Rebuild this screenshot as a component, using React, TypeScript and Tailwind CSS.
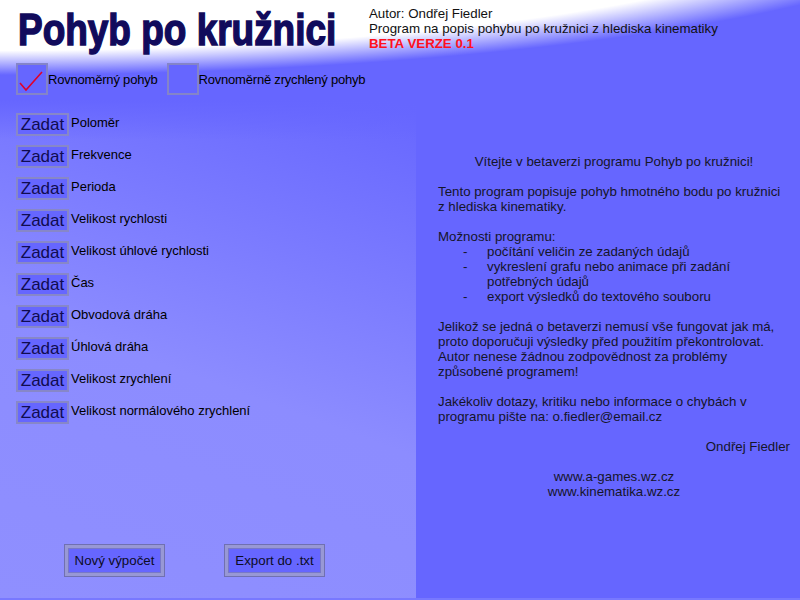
import React from 'react';

const quantities = [
  'Poloměr',
  'Frekvence',
  'Perioda',
  'Velikost rychlosti',
  'Velikost úhlové rychlosti',
  'Čas',
  'Obvodová dráha',
  'Úhlová dráha',
  'Velikost zrychlení',
  'Velikost normálového zrychlení',
];

const CheckBox: React.FC<{ checked?: boolean; label: string }> = ({ checked, label }) => (
  <div className="flex items-center">
    <div className="w-[32px] h-[32px] border-2 border-[#8484c8] bg-[#6666ff] flex-shrink-0">
      {checked && (
        <svg width="28" height="28" viewBox="0 0 28 28">
          <path d="M2 18 L8 25 L24 7" fill="none" stroke="#e0002a" strokeWidth="1.6" />
        </svg>
      )}
    </div>
    <span className="text-[13px] leading-[15px] text-black tracking-[-0.2px]">{label}</span>
  </div>
);

const BigButton: React.FC<{ children: React.ReactNode }> = ({ children }) => (
  <button className="w-[101px] h-[33px] border border-[#7070b0] bg-[#6666ff] shadow-[inset_0_0_0_3px_#9898d4,inset_0_0_0_4px_#7777c8] text-[13.3px] leading-[15px] text-[#0c0c26] flex items-center justify-center">
    {children}
  </button>
);

const Line: React.FC<{ children?: React.ReactNode; className?: string }> = ({ children, className = '' }) => (
  <div className={`h-[15px] whitespace-nowrap ${className}`}>{children}</div>
);

const Bullet: React.FC<{ children: React.ReactNode }> = ({ children }) => (
  <div className="flex">
    <div className="w-[49px] pl-[25px] flex-shrink-0 h-[15px]">-</div>
    <div>{children}</div>
  </div>
);

export default function App() {
  return (
    <div className="w-[800px] h-[600px] overflow-hidden flex flex-col bg-[#6666ff] bg-[radial-gradient(ellipse_1000px_175px_at_0px_-100px,#ffffff_86%,#6666ff_100%)] [font-family:'Liberation_Sans',Arial,sans-serif]">
      {/* header */}
      <div className="flex items-start h-[52px]">
        <div className="w-[369px] pl-[18px] pt-[8px] flex-shrink-0">
          <h1 className="text-[44px] leading-[44px] font-bold text-[#110b5c] whitespace-nowrap scale-x-[0.84] origin-left [-webkit-text-stroke:1.5px_#110b5c]">
            Pohyb po kružnici
          </h1>
        </div>
        <div className="pt-[6px] text-[13.3px] leading-[15px] text-[#111111]">
          <div>Autor: Ondřej Fiedler</div>
          <div>Program na popis pohybu po kružnici z hlediska kinematiky</div>
          <div className="text-[#ff1020] font-bold">BETA VERZE 0.1</div>
        </div>
      </div>

      {/* motion type */}
      <div className="flex items-center gap-[9px] pl-[16px] mt-[11px] h-[32px]">
        <CheckBox checked label="Rovnoměrný pohyb" />
        <CheckBox label="Rovnoměrně zrychlený pohyb" />
      </div>

      {/* main */}
      <div className="flex flex-1 mt-[5px] border-b-2 border-[#7878ff]">
        <div className="w-[416px] flex flex-col bg-[linear-gradient(to_bottom,#6666ff_0px,rgba(102,102,255,0)_40px),linear-gradient(200deg,#6666ff_0%,#8c8cff_55%,#8f8fff_100%)]">
          <div className="flex flex-col gap-[9px] pl-[16px] pt-[13px]">
            {quantities.map((q) => (
              <div key={q} className="flex items-start h-[23px]">
                <button className="w-[53px] h-[23px] border-2 border-[#8787c8] bg-[#6666ff] text-[17px] leading-[17px] text-[#100c50] flex items-center justify-center flex-shrink-0">
                  Zadat
                </button>
                <span className="ml-[2px] pt-[2px] text-[13px] leading-[15px] text-black whitespace-nowrap">{q}</span>
              </div>
            ))}
          </div>
          <div className="mt-auto flex gap-[59px] pl-[64px] pb-[21px]">
            <BigButton>Nový výpočet</BigButton>
            <BigButton>Export do .txt</BigButton>
          </div>
        </div>

        <div className="flex-1 pl-[22px] pr-[10px] pt-[54px] text-[13.3px] leading-[15px] text-[#15152a]">
          <Line className="text-center">Vítejte v betaverzi programu Pohyb po kružnici!</Line>
          <Line />
          <Line>Tento program popisuje pohyb hmotného bodu po kružnici</Line>
          <Line>z hlediska kinematiky.</Line>
          <Line />
          <Line>Možnosti programu:</Line>
          <Bullet>počítání veličin ze zadaných údajů</Bullet>
          <Bullet>
            vykreslení grafu nebo animace při zadání
            <br />
            potřebných údajů
          </Bullet>
          <Bullet>export výsledků do textového souboru</Bullet>
          <Line />
          <Line>Jelikož se jedná o betaverzi nemusí vše fungovat jak má,</Line>
          <Line>proto doporučuji výsledky před použitím překontrolovat.</Line>
          <Line>Autor nenese žádnou zodpovědnost za problémy</Line>
          <Line>způsobené programem!</Line>
          <Line />
          <Line>Jakékoliv dotazy, kritiku nebo informace o chybách v</Line>
          <Line>programu pište na: o.fiedler@email.cz</Line>
          <Line />
          <Line className="text-right">Ondřej Fiedler</Line>
          <Line />
          <Line className="text-center">www.a-games.wz.cz</Line>
          <Line className="text-center">www.kinematika.wz.cz</Line>
        </div>
      </div>
    </div>
  );
}
